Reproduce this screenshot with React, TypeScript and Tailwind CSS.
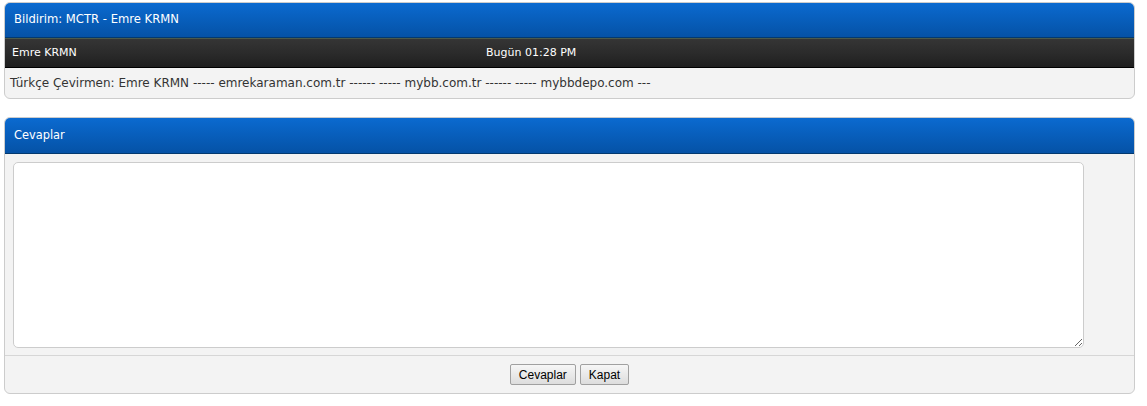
export default function App() {
  const font = { fontFamily: '"DejaVu Sans", Verdana, sans-serif' }
  const btnFont = { fontFamily: '"Liberation Sans", Arial, sans-serif' }

  return (
    <div className="min-h-[406px] bg-white px-[4px] pt-[2px] w-[1139px]" style={font}>
      {/* Bildirim panel */}
      <div className="rounded-[6px] border border-[#cccccc] bg-[#f3f3f3] overflow-hidden">
        <div className="h-[35px] flex items-center px-[9px] text-[11.6px] text-white bg-gradient-to-b from-[#0b6ad0] to-[#0552a6] border-b border-[#03396f]">
          Bildirim: MCTR - Emre KRMN
        </div>
        <div className="h-[30px] flex items-center text-[11px] text-white bg-gradient-to-b from-[#353535] via-[#2b2b2b] to-[#1f1f1f] border-t border-[#4b5a4b] border-b border-b-black">
          <div className="w-[481px] pl-[7px]">Emre KRMN</div>
          <div>Bugün 01:28 PM</div>
        </div>
        <div className="h-[30px] flex items-center px-[5px] text-[12px] text-[#333333]">
          Türkçe Çevirmen: Emre KRMN ----- emrekaraman.com.tr ------ ----- mybb.com.tr ------ ----- mybbdepo.com ---
        </div>
      </div>

      {/* Cevaplar panel */}
      <div className="mt-[18px] rounded-[6px] border border-[#cccccc] bg-[#f3f3f3] overflow-hidden">
        <div className="h-[36px] flex items-center px-[9px] text-[11.4px] text-white bg-gradient-to-b from-[#0b6ad0] to-[#0552a6] border-b border-[#03396f]">
          Cevaplar
        </div>
        <div className="px-[8px] pt-[8px] pb-[7px]">
          <textarea className="block w-[1071px] h-[186px] rounded-[5px] border border-[#cccccc] bg-white resize-y outline-none" />
        </div>
        <div className="border-t border-[#d6d6d6] h-[38px] flex items-center justify-center gap-[4px]">
          <button
            className="h-[21px] px-[8px] border border-[#a0a0a0] rounded-[2px] bg-gradient-to-b from-[#f6f6f6] to-[#dddddd] text-[12px] text-black leading-none"
            style={btnFont}
          >
            Cevaplar
          </button>
          <button
            className="h-[21px] px-[8px] border border-[#a0a0a0] rounded-[2px] bg-gradient-to-b from-[#f6f6f6] to-[#dddddd] text-[12px] text-black leading-none"
            style={btnFont}
          >
            Kapat
          </button>
        </div>
      </div>
    </div>
  )
}
